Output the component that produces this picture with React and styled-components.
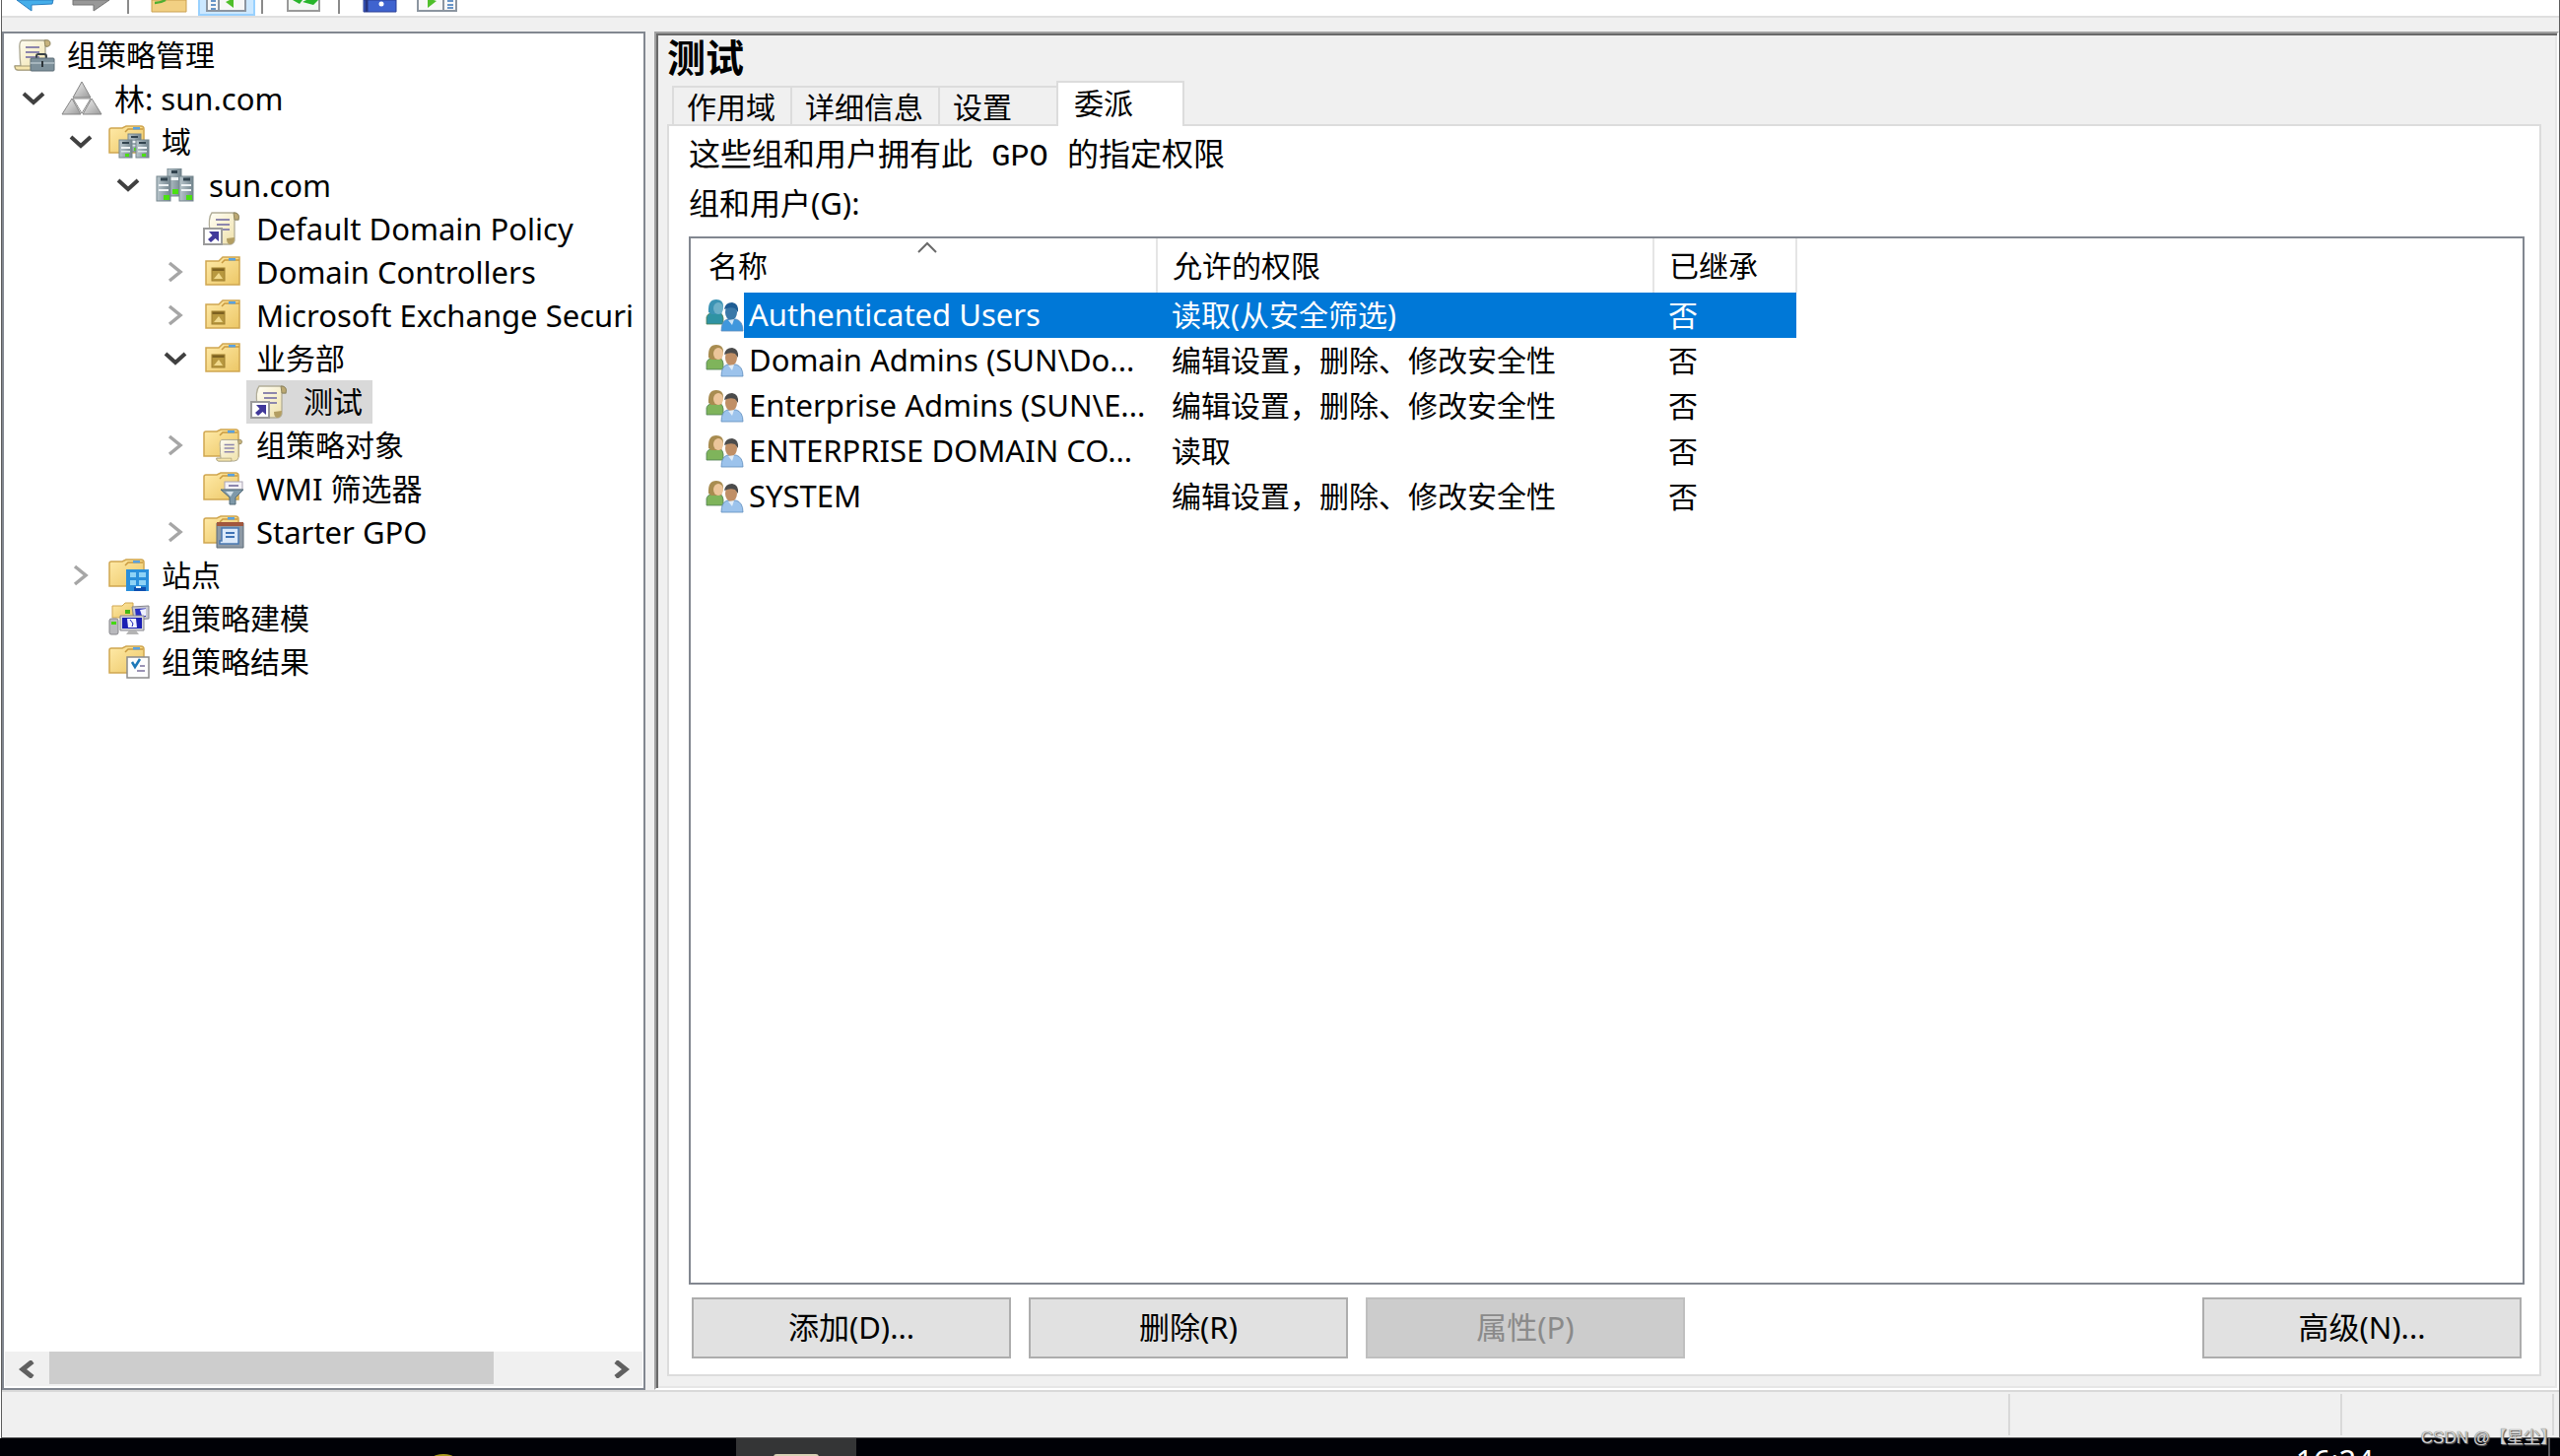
import React from "react";
import styled, { createGlobalStyle, css } from "styled-components";

const UI_FONT = '"Noto Sans", "Noto Sans CJK SC", sans-serif';
const CJK_FONT = '"Noto Sans CJK SC", "Noto Sans", sans-serif';

const GlobalStyle = createGlobalStyle`
  *, *::before, *::after { box-sizing: border-box; }
  body { margin: 0; background: #ffffff; }
  button { font: inherit; color: inherit; padding: 0; margin: 0; border: 0; background: none; }
`;

const Screen = styled.div`
  position: relative;
  display: flex;
  flex-direction: column;
  height: 100vh;
  overflow: hidden;
  font-family: ${UI_FONT};
  font-size: 30px;
  line-height: 44px;
  color: #000;
`;

const Window = styled.div`
  flex: 1;
  min-height: 0;
  display: flex;
  flex-direction: column;
  margin-left: 1px;
  background: #f0f0f0;
  border: 1px solid #5c5c5c;
  border-top: 0;
`;

/* ---------- toolbar ---------- */

const Toolbar = styled.div`
  display: flex;
  height: 18px;
  padding-left: 5px;
  background: #fff;
  border-bottom: 2px solid #dfdfdf;
`;

const ToolButton = styled.button`
  width: 58px;
  height: 16px;
  display: flex;
  justify-content: center;
  border: 2px solid transparent;
  border-top: 0;
  ${(p) =>
    p.$active &&
    css`
      background: #cce8ff;
      border-color: #99d1ff;
    `}
`;

const ToolSeparator = styled.span`
  width: 2px;
  height: 14px;
  margin: 0 12px 0 6px;
  background: #8a8a8a;
`;

/* ---------- main area ---------- */

const Body = styled.div`
  flex: 1;
  min-height: 0;
  display: grid;
  grid-template-columns: 653px minmax(0, 1fr);
  column-gap: 9px;
  padding-top: 14px;
`;

const TreePanel = styled.nav`
  display: flex;
  flex-direction: column;
  min-width: 0;
  padding: 0 1px 2px;
  background: #fff;
  border: 2px solid #828790;
`;

const TreeList = styled.ul`
  flex: 1;
  min-height: 0;
  margin: 0;
  padding: 0;
  overflow: hidden;
  list-style: none;
`;

const TreeRow = styled.li`
  display: flex;
  align-items: center;
  height: 44px;
  padding-left: ${(p) => (p.$level === 0 ? 5 : 5 + (p.$level - 1) * 48)}px;
  white-space: nowrap;
`;

const Expander = styled.button`
  flex: none;
  width: 48px;
  height: 44px;
  display: flex;
  align-items: center;
  justify-content: center;
`;

const ExpanderSpace = styled.span`
  flex: none;
  width: 48px;
`;

const TreeLabel = styled.span`
  flex: none;
  display: flex;
  align-items: center;
  gap: 12px;
  height: 44px;
  padding: 0 10px 0 4px;
  font-size: ${(p) => (p.$latin ? 31 : 30)}px;
  background: ${(p) => (p.$selected ? "#d9d9d9" : "transparent")};
`;

const ScrollBar = styled.div`
  display: flex;
  height: 35px;
  background: #f0f0f0;
`;

const ScrollButton = styled.button`
  width: 45px;
  display: flex;
  align-items: center;
  justify-content: center;
`;

const ScrollTrack = styled.div`
  flex: 1;
`;

const ScrollThumb = styled.div`
  width: 81%;
  height: 33px;
  background: #cdcdcd;
`;

const DetailPanel = styled.main`
  display: flex;
  flex-direction: column;
  min-width: 0;
  padding: 0 16px 12px 11px;
  border: 2px solid;
  border-color: #a0a0a0 #fff #fff #a0a0a0;
  box-shadow: inset 2px 2px #696969, inset -2px -2px #e6e6e6;
`;

const Title = styled.h1`
  margin: 0 0 4px;
  font-family: ${CJK_FONT};
  font-size: 39px;
  line-height: 44px;
  font-weight: 700;
`;

const TabBar = styled.div`
  display: flex;
  align-items: flex-end;
  height: 44px;
  padding-left: 5px;
`;

const Tab = styled.button`
  position: relative;
  height: 39px;
  min-width: 120px;
  padding: 0 15px 2px 13px;
  text-align: left;
  font-family: ${CJK_FONT};
  font-size: 30px;
  line-height: 34px;
  border-top: 2px solid #dcdcdc;
  border-left: 2px solid #dcdcdc;
  ${(p) =>
    p.$active &&
    css`
      height: 46px;
      min-width: 130px;
      margin-bottom: -2px;
      padding: 0 16px 6px;
      background: #fff;
      border-right: 2px solid #dcdcdc;
    `}
`;

const TabPanel = styled.section`
  flex: 1;
  min-height: 0;
  display: flex;
  flex-direction: column;
  padding: 0 15px 16px 20px;
  background: #fff;
  border: 2px solid #dcdcdc;
`;

const Note = styled.p`
  margin: 0;
  padding-top: 8px;
  font-family: "Liberation Mono", "Noto Sans CJK SC", monospace;
  font-size: 32px;
  line-height: 48px;
`;

const ListCaption = styled.div`
  font-size: 31px;
  line-height: 44px;
`;

const ListBox = styled.div`
  flex: 1;
  min-height: 0;
  margin: 12px 0 13px;
  border: 2px solid #828790;
  overflow: hidden;
`;

const Table = styled.table`
  width: 1122px;
  table-layout: fixed;
  border-collapse: collapse;
  text-align: left;
`;

const HeadCell = styled.th`
  position: relative;
  width: ${(p) => p.$width}px;
  height: 55px;
  padding: 0 0 0 ${(p) => (p.$first ? 18 : 15)}px;
  font-weight: 400;
  border-right: 2px solid #e5e5e5;
`;

const SortMark = styled.svg`
  position: absolute;
  top: 3px;
  left: calc(50% - 6px);
`;

const Row = styled.tr`
  height: 46px;
  color: ${(p) => (p.$selected ? "#fff" : "#000")};
`;

const Cell = styled.td`
  height: 46px;
  padding: 0 0 0 15px;
  white-space: nowrap;
  background: ${(p) => (p.$selected ? "#0078d7" : "transparent")};
`;

const NameCell = styled.td`
  height: 46px;
  padding: 0 0 0 15px;
`;

const NameBox = styled.div`
  display: flex;
  align-items: center;
`;

const NameText = styled.span`
  flex: 1;
  height: 46px;
  padding-left: 5px;
  font-size: 31px;
  line-height: 44px;
  white-space: nowrap;
  background: ${(p) => (p.$selected ? "#0078d7" : "transparent")};
`;

const Actions = styled.div`
  display: flex;
  gap: 18px;
  padding: 0 3px;
`;

const ActionButton = styled.button`
  width: 324px;
  height: 62px;
  padding-bottom: 2px;
  text-align: center;
  font-size: 31px;
  background: #e1e1e1;
  border: 2px solid #adadad;
  margin-left: ${(p) => (p.$end ? "auto" : "0")};
  &:disabled {
    color: #8a8a8a;
    background: #cccccc;
    border-color: #bfbfbf;
  }
`;

/* ---------- status bar and taskbar ---------- */

const StatusBar = styled.footer`
  display: flex;
  height: 48px;
  padding: 2px 5px 2px 0;
  border-top: 2px solid #d9d9d9;
`;

const StatusCell = styled.div`
  width: ${(p) => (p.$width ? `${p.$width}px` : "auto")};
  flex: ${(p) => (p.$width ? "none" : 1)};
  border-right: 2px solid #d9d9d9;
`;

const Taskbar = styled.div`
  display: flex;
  height: 18px;
  overflow: hidden;
  background: #000106;
  color: #fff;
`;

const TaskButton = styled.button`
  width: 122px;
  height: 18px;
  display: flex;
  justify-content: center;
  align-items: flex-end;
  margin-left: ${(p) => p.$gap}px;
  background: ${(p) => (p.$active ? "#343536" : "transparent")};
`;

const Clock = styled.time`
  margin-left: auto;
  margin-right: 177px;
  padding-top: 7px;
  font-size: 31px;
  line-height: 30px;
`;

const ShowDesktop = styled.span`
  width: 12px;
  border-left: 2px solid #55565a;
`;

const Watermark = styled.span`
  position: absolute;
  right: 3px;
  bottom: 7px;
  font-family: "Liberation Sans", "Noto Sans CJK SC", sans-serif;
  font-size: 17px;
  line-height: 22px;
  color: #d2d2d2;
  text-shadow: 0 0 1px #4a4a4a, 1px 1px 1px #6a6a6a;
`;

/* ---------- icons ---------- */

const Icon = ({ children }) => (
  <svg width="42" height="34" viewBox="0 0 42 34" aria-hidden="true">
    <defs>
      <linearGradient id="gold" x1="0" y1="0" x2="1" y2="1">
        <stop offset="0" stopColor="#ffeaa8" />
        <stop offset="1" stopColor="#ecc766" />
      </linearGradient>
      <linearGradient id="steel" x1="0" y1="0" x2="1" y2="0">
        <stop offset="0" stopColor="#b9c6cc" />
        <stop offset="1" stopColor="#74868f" />
      </linearGradient>
      <linearGradient id="paper" x1="0" y1="0" x2="1" y2="1">
        <stop offset="0" stopColor="#fffef6" />
        <stop offset="1" stopColor="#eedfa4" />
      </linearGradient>
      <linearGradient id="stone" x1="0" y1="0" x2="1" y2="1">
        <stop offset="0" stopColor="#f4f4f4" />
        <stop offset="1" stopColor="#9a9a9a" />
      </linearGradient>
    </defs>
    {children}
  </svg>
);

const FolderShape = () => (
  <g>
    <path d="M1 5 Q1 3 3 3 H14 L18 1 H33 Q36 1 36 4 V28 H1Z" fill="url(#gold)" stroke="#d0a650" strokeWidth="1.5" />
    <path d="M17 7 L20 4 H35" fill="none" stroke="#c99a40" strokeWidth="1.5" />
    <rect x="25" y="2" width="7" height="2.5" fill="#5aa2e0" />
  </g>
);

const Server = ({ x, y }) => (
  <g transform={`translate(${x} ${y})`}>
    <rect x="0" y="0" width="13" height="18" fill="url(#steel)" stroke="#74858d" strokeWidth="1" />
    <rect x="3" y="2" width="7" height="2" fill="#31434e" />
    <rect x="2" y="7" width="9" height="2" fill="#eef3f5" />
    <rect x="2" y="11" width="9" height="1.5" fill="#dbe4e8" />
    <rect x="6" y="14" width="4" height="3" fill="#4be012" />
  </g>
);

const Scroll = ({ x = 0, y = 0, k = 1 }) => (
  <g transform={`translate(${x} ${y}) scale(${k})`}>
    <path d="M8 2 H33 Q36 2 36 5 Q36 8 32 8 V27 Q31 32 26 32 H4 Q1 32 1 28 H7 Q6 20 6 12 Q5 4 8 2Z" fill="url(#paper)" stroke="#a9a590" strokeWidth="1.3" />
    <path d="M31 2 Q37 1 37 5 Q37 9 32 8Z" fill="#c6b27c" stroke="#8f865f" />
    <path d="M12 9 H26 M12 14 H26 M12 19 H26" stroke="#8d86ad" strokeWidth="2" />
    <path d="M1 28 H22 V32 H4 Q1 32 1 28Z" fill="#f6e6ae" stroke="#a49a74" />
  </g>
);

const icons = {
  root: (
    <Icon>
      <Scroll />
      <path d="M23 20 V18 Q23 16 25 16 H31 Q33 16 33 18 V20" fill="none" stroke="#3b4348" strokeWidth="2" />
      <rect x="17" y="20" width="24" height="13" rx="1" fill="#7d909a" stroke="#5d6d76" />
      <path d="M17 25 H41" stroke="#b4c2c9" strokeWidth="1.5" />
      <rect x="28" y="23" width="2" height="6" fill="#2b3338" />
    </Icon>
  ),
  forest: (
    <Icon>
      <path d="M21 0 L30 16 H12Z" fill="url(#stone)" stroke="#858585" />
      <path d="M11 17 L20 33 H1Z" fill="url(#stone)" stroke="#858585" />
      <path d="M31 17 L41 33 H22Z" fill="url(#stone)" stroke="#858585" />
      <path d="M12 17 H30 L21 32Z" fill="#fff" stroke="#8a8a8a" />
    </Icon>
  ),
  domains: (
    <Icon>
      <FolderShape />
      <Server x={20} y={9} />
      <Server x={11} y={15} />
      <Server x={28} y={15} />
    </Icon>
  ),
  domain: (
    <Icon>
      <g transform="translate(1 0)">
        <rect x="11" y="0" width="14" height="28" fill="url(#steel)" stroke="#74858d" />
        <rect x="15" y="2" width="6" height="3" fill="#31434e" />
        <rect x="14" y="9" width="8" height="3" fill="#eef3f5" />
        <rect x="0" y="8" width="14" height="25" fill="url(#steel)" stroke="#74858d" />
        <rect x="23" y="8" width="14" height="25" fill="url(#steel)" stroke="#74858d" />
        <path d="M4 11 H11 M27 11 H34" stroke="#31434e" strokeWidth="3" />
        <path d="M2 17 H12 M25 17 H35 M2 22 H12 M25 22 H35" stroke="#eef3f5" strokeWidth="2" />
        <rect x="7" y="27" width="6" height="5" fill="#4be012" />
        <rect x="30" y="27" width="6" height="5" fill="#4be012" />
        <rect x="16" y="21" width="6" height="5" fill="#4be012" />
      </g>
    </Icon>
  ),
  gpoLink: (
    <Icon>
      <path d="M9 1 H33 Q36 2 36 5 V8 H32 V29 Q31 33 27 33 H20 L7 20 Q5 6 9 1Z" fill="url(#paper)" stroke="#b1ad98" strokeWidth="1.3" />
      <path d="M31 1 Q38 1 36 8 H32Z" fill="#bda973" stroke="#8f865f" />
      <path d="M24 27 Q24 33 28 33 Q32 32 32 26Z" fill="#b39e62" />
      <path d="M13 8 H27 M14 13 H27 M18 18 H27" stroke="#8d86ad" strokeWidth="2" />
      <rect x="1" y="17" width="18" height="16" fill="#fff" stroke="#9b9b9b" strokeWidth="2" />
      <path d="M6 20 H16 V30 L12.500 27 L8 31 L5 28 L9.500 24Z" fill="#40389a" />
    </Icon>
  ),
  ou: (
    <Icon>
      <g transform="translate(2 1)">
        <path d="M1 5 H14 L18 1 H35 V29 H1Z" fill="url(#gold)" stroke="#d0a650" strokeWidth="1.5" />
        <path d="M17 7 L20 4 H35" fill="none" stroke="#c99a40" strokeWidth="1.5" />
        <rect x="24" y="2" width="7" height="2.500" fill="#5aa2e0" />
        <rect x="7" y="12" width="13" height="13" fill="#b8983f" stroke="#a08030" />
        <path d="M7.500 12.500 H19.500 V15 H7.500Z" fill="#7d6120" />
        <path d="M9 23 L14 17 L18 23Z" fill="#f0d98c" />
      </g>
    </Icon>
  ),
  gpoFolder: (
    <Icon>
      <FolderShape />
      <Scroll x={13} y={10} k={0.72} />
    </Icon>
  ),
  wmi: (
    <Icon>
      <FolderShape />
      <rect x="22" y="10" width="18" height="8" fill="#f4f2f6" stroke="#aaa3b3" />
      <path d="M26 14 H36" stroke="#8d86ad" strokeWidth="2" />
      <path d="M18 18 H41 L33 26 V33 H27 V26Z" fill="#7f99a8" stroke="#536a78" />
      <path d="M23 20 H31 L28 25Z" fill="#d5e3ea" />
    </Icon>
  ),
  starter: (
    <Icon>
      <FolderShape />
      <path d="M14 8 H41 V33 H14Z" fill="#8d99a5" stroke="#5d6a77" />
      <rect x="14" y="7" width="27" height="4" fill="#a1573e" />
      <path d="M19 13 H36 V29 H17 V26 H19Z" fill="#dceafa" stroke="#4a7ab2" strokeWidth="1.500" />
      <path d="M23 18 H32 M23 22 H32" stroke="#3f73b5" strokeWidth="2" />
    </Icon>
  ),
  sites: (
    <Icon>
      <FolderShape />
      <rect x="18" y="11" width="23" height="22" fill="#2a8fdb" />
      <path d="M22 14 H28 V19 H22Z M31 14 H38 V19 H31Z M22 22 H28 V27 H22Z M31 22 H38 V27 H31Z" fill="#8fd3f6" />
      <path d="M26 29 H38 V33 H26Z" fill="#0d4fb0" />
      <path d="M28 28 H33 V30 H28Z" fill="#e6f7ff" />
    </Icon>
  ),
  modeling: (
    <Icon>
      <path d="M4 4 H14 L17 1 H25 V16 H4Z" fill="url(#gold)" stroke="#d0a650" />
      <path d="M24 5 L41 4 V17 L26 18Z" fill="#c9c9cf" stroke="#85858c" />
      <path d="M27 7 L38 6.500 V15 L28 15.500Z" fill="#2a2fc4" />
      <path d="M32 8 L38 7 V14 L34 14Z" fill="#eef0ff" />
      <rect x="1" y="17" width="9" height="16" rx="2" fill="#b9b9bd" stroke="#87878c" />
      <rect x="3" y="20" width="5" height="3" fill="#45d912" />
      <rect x="17" y="8" width="5" height="4" fill="#45b912" />
      <path d="M12 14 H36 V29 H12Z" fill="#d6d6da" stroke="#88888f" />
      <path d="M14 16 H34 V27 H14Z" fill="#1b20b4" />
      <path d="M19 17 L28 17 L29 26 L20 26Z" fill="#f2f4ff" />
      <path d="M22 18 L25 22 L24 25" stroke="#1b20b4" fill="none" />
      <path d="M18 33 L21 29 H28 L31 33Z" fill="#b4b4b4" />
    </Icon>
  ),
  results: (
    <Icon>
      <FolderShape />
      <rect x="19" y="12" width="22" height="21" fill="#fdfdfd" stroke="#8b8b8b" strokeWidth="1.500" />
      <path d="M24 17 L27 22 L32 14" fill="none" stroke="#1c78b8" strokeWidth="2.500" />
      <path d="M32 21 H37 M29 26 H37" stroke="#9a93b5" strokeWidth="2" />
    </Icon>
  ),
};

const UsersIcon = ({ selected }) => {
  const c = selected
    ? { hair: "#3b93b4", face: "#6db0c8", body: "#2f93a3", hair2: "#1f5d94", face2: "#3a78a8", body2: "#3f97dd" }
    : { hair: "#a88c50", face: "#ecc59a", body: "#7fb45b", hair2: "#4b4b4b", face2: "#c08f66", body2: "#9cc3ec" };
  return (
    <svg width="39" height="34" viewBox="0 0 39 34" aria-hidden="true">
      <path d="M1 26 V19 Q2 15 8 14 H14 Q18 16 18 20 V26Z" fill={c.body} stroke="#4f7f52" strokeWidth="0.8" />
      <path d="M3 14 Q2 1 11 1 Q18 1 18 8 L16 16 H6Z" fill={c.hair} />
      <ellipse cx="13" cy="10" rx="5" ry="6" fill={c.face} />
      <path d="M16 33 Q16 23 22 21 H31 Q38 23 38 33Z" fill={c.body2} stroke="#5f8dbd" strokeWidth="0.8" />
      <ellipse cx="26" cy="14" rx="6" ry="8" fill={c.face2} />
      <path d="M19 11 Q20 4 27 4 Q34 5 33 14 L30 10 Q25 8 19 11Z" fill={c.hair2} />
      <path d="M23 22 L27 27 L29 21Z" fill="#f3f7fb" opacity="0.8" />
    </svg>
  );
};

const ChevronDown = () => (
  <svg width="24" height="16" viewBox="0 0 24 16" aria-hidden="true">
    <path d="M2 3 L12 12 L22 3" fill="none" stroke="#404040" strokeWidth="4" />
  </svg>
);

const ChevronRight = () => (
  <svg width="16" height="22" viewBox="0 0 16 22" aria-hidden="true">
    <path d="M2 2 L13 11 L2 20" fill="none" stroke="#a6a6a6" strokeWidth="3.500" />
  </svg>
);

const ScrollArrow = ({ left }) => (
  <svg width="18" height="18" viewBox="0 0 18 18" aria-hidden="true">
    <path d={left ? "M14 1 L4 9 L14 17" : "M4 1 L14 9 L4 17"} fill="none" stroke="#606060" strokeWidth="5" />
  </svg>
);

const tools = {
  back: <path d="M2 0 L17 11 V5 L38 4 L39 0Z" fill="#45aeea" stroke="#2b7fc0" />,
  forward: <path d="M1 0 V5 H22 V11 L38 0Z" fill="#989898" stroke="#747474" />,
  folder: (
    <g>
      <path d="M3 0 H38 V12 H3Z" fill="#f2d083" stroke="#caa050" />
      <path d="M6 3 Q12 3 17 0" fill="none" stroke="#4fae30" strokeWidth="2.500" />
    </g>
  ),
  treePane: (
    <g>
      <path d="M1 -2 H40 V11 H1Z" fill="#f7f7f7" stroke="#8c95a0" strokeWidth="2" />
      <path d="M13 0 V11" stroke="#8c95a0" strokeWidth="2" />
      <path d="M5 1 H10 M5 5 H10 M5 9 H10" stroke="#3a76b8" strokeWidth="1.500" />
      <path d="M28 -2 V8 L20 2Z" fill="#4fbf2a" />
    </g>
  ),
  refresh: (
    <g>
      <path d="M5 -2 H37 V11 H5Z" fill="#f2f6f2" stroke="#9a9a9a" strokeWidth="2" />
      <path d="M10 0 L17 4 L20 0Z M20 2 L31 5 L36 0 H24Z" fill="#27b52a" />
    </g>
  ),
  help: (
    <g>
      <path d="M4 0 H37 V12 H4Z" fill="#3f63cf" stroke="#2b3f94" />
      <path d="M7 0 V12" stroke="#27357e" strokeWidth="3" />
      <circle cx="22" cy="4" r="2.500" fill="#fff" />
    </g>
  ),
  actionPane: (
    <g>
      <path d="M1 -2 H40 V11 H1Z" fill="#f7f7f7" stroke="#8c95a0" strokeWidth="2" />
      <path d="M27 0 V11" stroke="#8c95a0" strokeWidth="2" />
      <path d="M31 1 H37 M31 5 H37 M31 8 H37" stroke="#3a76b8" strokeWidth="1.500" />
      <path d="M11 -2 V8 L20 1Z" fill="#4fbf2a" />
    </g>
  ),
};

const Tool = ({ name, label, active }) => (
  <ToolButton type="button" aria-label={label} $active={active}>
    <svg width="42" height="13" viewBox="0 0 42 13" aria-hidden="true">
      {tools[name]}
    </svg>
  </ToolButton>
);

/* ---------- data ---------- */

const tree = [
  { level: 0, icon: "root", text: "组策略管理" },
  { level: 1, icon: "forest", text: "林: sun.com", open: true, latin: true },
  { level: 2, icon: "domains", text: "域", open: true },
  { level: 3, icon: "domain", text: "sun.com", open: true, latin: true },
  { level: 4, icon: "gpoLink", text: "Default Domain Policy", latin: true },
  { level: 4, icon: "ou", text: "Domain Controllers", open: false, latin: true },
  { level: 4, icon: "ou", text: "Microsoft Exchange Securi", open: false, latin: true },
  { level: 4, icon: "ou", text: "业务部", open: true },
  { level: 5, icon: "gpoLink", text: "测试", selected: true },
  { level: 4, icon: "gpoFolder", text: "组策略对象", open: false },
  { level: 4, icon: "wmi", text: "WMI 筛选器", latin: true },
  { level: 4, icon: "starter", text: "Starter GPO", open: false, latin: true },
  { level: 2, icon: "sites", text: "站点", open: false },
  { level: 2, icon: "modeling", text: "组策略建模" },
  { level: 2, icon: "results", text: "组策略结果" },
];

const tabs = ["作用域", "详细信息", "设置", "委派"];

const groups = [
  { name: "Authenticated Users", rights: "读取(从安全筛选)", selected: true },
  { name: "Domain Admins (SUN\\Do...", rights: "编辑设置，删除、修改安全性" },
  { name: "Enterprise Admins (SUN\\E...", rights: "编辑设置，删除、修改安全性" },
  { name: "ENTERPRISE DOMAIN CO...", rights: "读取" },
  { name: "SYSTEM", rights: "编辑设置，删除、修改安全性" },
];

function TreeItem({ item }) {
  let lead = null;
  if (item.open !== undefined) {
    lead = (
      <Expander type="button" aria-label={item.text} aria-expanded={item.open}>
        {item.open ? <ChevronDown /> : <ChevronRight />}
      </Expander>
    );
  } else if (item.level > 0) {
    lead = <ExpanderSpace />;
  }
  return (
    <TreeRow $level={item.level}>
      {lead}
      <TreeLabel $selected={item.selected} $latin={item.latin}>
        {icons[item.icon]}
        <span>{item.text}</span>
      </TreeLabel>
    </TreeRow>
  );
}

export default function App() {
  return (
    <Screen>
      <GlobalStyle />
      <Window>
        <Toolbar>
          <Tool name="back" label="后退" />
          <Tool name="forward" label="前进" />
          <ToolSeparator />
          <Tool name="folder" label="上移" />
          <Tool name="treePane" label="控制台树" active />
          <ToolSeparator />
          <Tool name="refresh" label="刷新" />
          <ToolSeparator />
          <Tool name="help" label="帮助" />
          <Tool name="actionPane" label="操作窗格" />
        </Toolbar>

        <Body>
          <TreePanel>
            <TreeList>
              {tree.map((item) => (
                <TreeItem key={item.text} item={item} />
              ))}
            </TreeList>
            <ScrollBar>
              <ScrollButton type="button" aria-label="向左">
                <ScrollArrow left />
              </ScrollButton>
              <ScrollTrack>
                <ScrollThumb />
              </ScrollTrack>
              <ScrollButton type="button" aria-label="向右">
                <ScrollArrow />
              </ScrollButton>
            </ScrollBar>
          </TreePanel>

          <DetailPanel>
            <Title>测试</Title>
            <TabBar role="tablist">
              {tabs.map((tab) => (
                <Tab key={tab} type="button" role="tab" aria-selected={tab === "委派"} $active={tab === "委派"}>
                  {tab}
                </Tab>
              ))}
            </TabBar>
            <TabPanel role="tabpanel">
              <Note>这些组和用户拥有此 GPO 的指定权限</Note>
              <ListCaption id="groups-caption">组和用户(G):</ListCaption>
              <ListBox>
                <Table aria-labelledby="groups-caption">
                  <thead>
                    <tr>
                      <HeadCell $width={473} $first>
                        名称
                        <SortMark width="20" height="12" viewBox="0 0 20 12" aria-hidden="true">
                          <path d="M1 11 L10 2 L19 11" fill="none" stroke="#6a6a6a" strokeWidth="2" />
                        </SortMark>
                      </HeadCell>
                      <HeadCell $width={504}>允许的权限</HeadCell>
                      <HeadCell $width={145}>已继承</HeadCell>
                    </tr>
                  </thead>
                  <tbody>
                    {groups.map((g) => (
                      <Row key={g.name} $selected={g.selected}>
                        <NameCell>
                          <NameBox>
                            <UsersIcon selected={g.selected} />
                            <NameText $selected={g.selected}>{g.name}</NameText>
                          </NameBox>
                        </NameCell>
                        <Cell $selected={g.selected}>{g.rights}</Cell>
                        <Cell $selected={g.selected}>否</Cell>
                      </Row>
                    ))}
                  </tbody>
                </Table>
              </ListBox>
              <Actions>
                <ActionButton type="button">添加(D)...</ActionButton>
                <ActionButton type="button">删除(R)</ActionButton>
                <ActionButton type="button" disabled>
                  属性(P)
                </ActionButton>
                <ActionButton type="button" $end>
                  高级(N)...
                </ActionButton>
              </Actions>
            </TabPanel>
          </DetailPanel>
        </Body>

        <StatusBar>
          <StatusCell />
          <StatusCell $width={337} />
          <StatusCell $width={215} />
        </StatusBar>
      </Window>

      <Taskbar>
        <TaskButton type="button" aria-label="浏览器" $gap={389}>
          <svg width="24" height="2" viewBox="0 0 24 2" aria-hidden="true">
            <ellipse cx="12" cy="3" rx="10" ry="3" fill="#a89a1c" />
          </svg>
        </TaskButton>
        <TaskButton type="button" aria-label="组策略管理" $gap={236} $active>
          <svg width="48" height="2" viewBox="0 0 48 2" aria-hidden="true">
            <rect x="1" y="0" width="46" height="6" rx="3" fill="#d8d0b4" />
          </svg>
        </TaskButton>
        <Clock>16:24</Clock>
        <ShowDesktop />
      </Taskbar>

      <Watermark>CSDN @【星尘】</Watermark>
    </Screen>
  );
}
